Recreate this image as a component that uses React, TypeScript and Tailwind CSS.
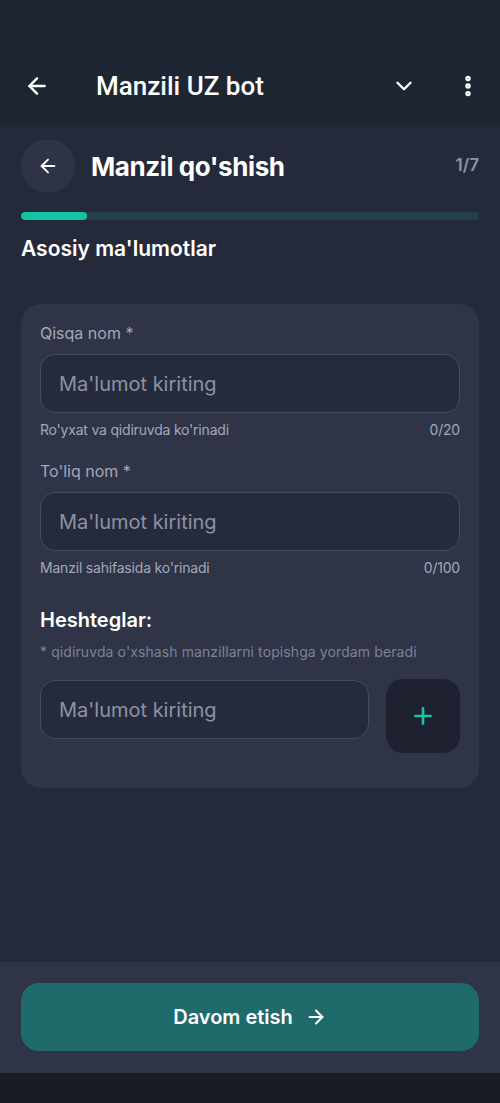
import { ArrowLeft, ArrowRight, ChevronDown, EllipsisVertical, Plus } from 'lucide-react';
import React from 'react';

const Field: React.FC<{ label: string; hint: string; count: string }> = ({ label, hint, count }) => (
  <div>
    <div className="text-[16px] text-[#a3a8b8] leading-5 mb-[11px]">{label}</div>
    <input
      placeholder="Ma'lumot kiriting"
      className="w-full h-[59px] rounded-[15px] bg-[#262b3c] border border-[#454b5f] px-[18px] text-[20px] text-white placeholder:text-[#8d92a3] outline-none"
    />
    <div className="flex justify-between mt-[7px] text-[14px] leading-5 text-[#a3a8b8] tracking-[-0.2px]">
      <span>{hint}</span>
      <span>{count}</span>
    </div>
  </div>
);

const App: React.FC = () => {
  return (
    <div className="w-[500px] h-[1103px] flex flex-col bg-[#252a3b] overflow-hidden" style={{ fontFamily: 'Inter, "Noto Sans", sans-serif' }}>
      {/* Telegram header */}
      <div className="h-[125px] bg-[#1f2633] flex items-end pb-[23px] shrink-0" style={{ fontFamily: 'Roboto, sans-serif' }}>
        <div className="flex items-center w-full h-[32px]">
          <ArrowLeft className="w-[26px] h-[26px] text-white ml-[24px]" strokeWidth={2.2} />
          <div className="ml-[46px] text-[26px] font-medium text-white">Manzili UZ bot</div>
          <ChevronDown className="w-[26px] h-[26px] text-white ml-auto" strokeWidth={2.2} />
          <EllipsisVertical className="w-[26px] h-[26px] text-white ml-[38px] mr-[19px]" strokeWidth={3} />
        </div>
      </div>

      <div className="flex-1 flex flex-col px-[21px]">
        <div className="flex items-center mt-[14px] h-[54px]">
          <button className="w-[54px] h-[54px] rounded-full bg-[#2e3345] flex items-center justify-center">
            <ArrowLeft className="w-[22px] h-[22px] text-white" strokeWidth={2} />
          </button>
          <h1 className="ml-[16px] text-[26px] font-bold text-white tracking-[-0.4px]">Manzil qo'shish</h1>
          <span className="ml-auto text-[17px] font-semibold text-[#8f94a4]">1/7</span>
        </div>

        <div className="mt-[19px] h-[8px] rounded-full bg-[#223f4a] overflow-hidden">
          <div className="h-full w-[66px] rounded-full bg-[#16c4a3]" />
        </div>

        <h2 className="mt-[15px] text-[21px] font-semibold text-white leading-7">Asosiy ma'lumotlar</h2>

        <div className="mt-[41px] rounded-[20px] bg-[#2f3447] px-[19px] pt-[19px] pb-[35px] flex flex-col">
          <Field label="Qisqa nom *" hint="Ro'yxat va qidiruvda ko'rinadi" count="0/20" />
          <div className="mt-[21px]">
            <Field label="To'liq nom *" hint="Manzil sahifasida ko'rinadi" count="0/100" />
          </div>
          <div className="mt-[30px] text-[20px] font-semibold text-white leading-6">Heshteglar:</div>
          <div className="mt-[10px] text-[14px] text-[#7d8295] leading-5 tracking-[0.1px]">* qidiruvda o'xshash manzillarni topishga yordam beradi</div>
          <div className="mt-[18px] flex items-start gap-[17px]">
            <input
              placeholder="Ma'lumot kiriting"
              className="flex-1 min-w-0 h-[59px] rounded-[15px] bg-[#262b3c] border border-[#454b5f] px-[18px] text-[20px] text-white placeholder:text-[#8d92a3] outline-none"
            />
            <button className="w-[74px] h-[74px] -mt-[1px] rounded-[17px] bg-[#1d2130] flex items-center justify-center shrink-0">
              <Plus className="w-[26px] h-[26px] text-[#19c4a5]" strokeWidth={2.4} />
            </button>
          </div>
        </div>
      </div>

      {/* Bottom action */}
      <div className="h-[111px] bg-[#2f3447] px-[21px] pt-[21px] shrink-0">
        <button className="w-full h-[68px] rounded-[18px] bg-[#1f6a6b] flex items-center justify-center gap-[12px] text-white text-[20px] font-semibold">
          Davom etish
          <ArrowRight className="w-[22px] h-[22px]" strokeWidth={2.2} />
        </button>
      </div>
      <div className="h-[30px] bg-[#181c25] shrink-0" />
    </div>
  );
};

export default App;
